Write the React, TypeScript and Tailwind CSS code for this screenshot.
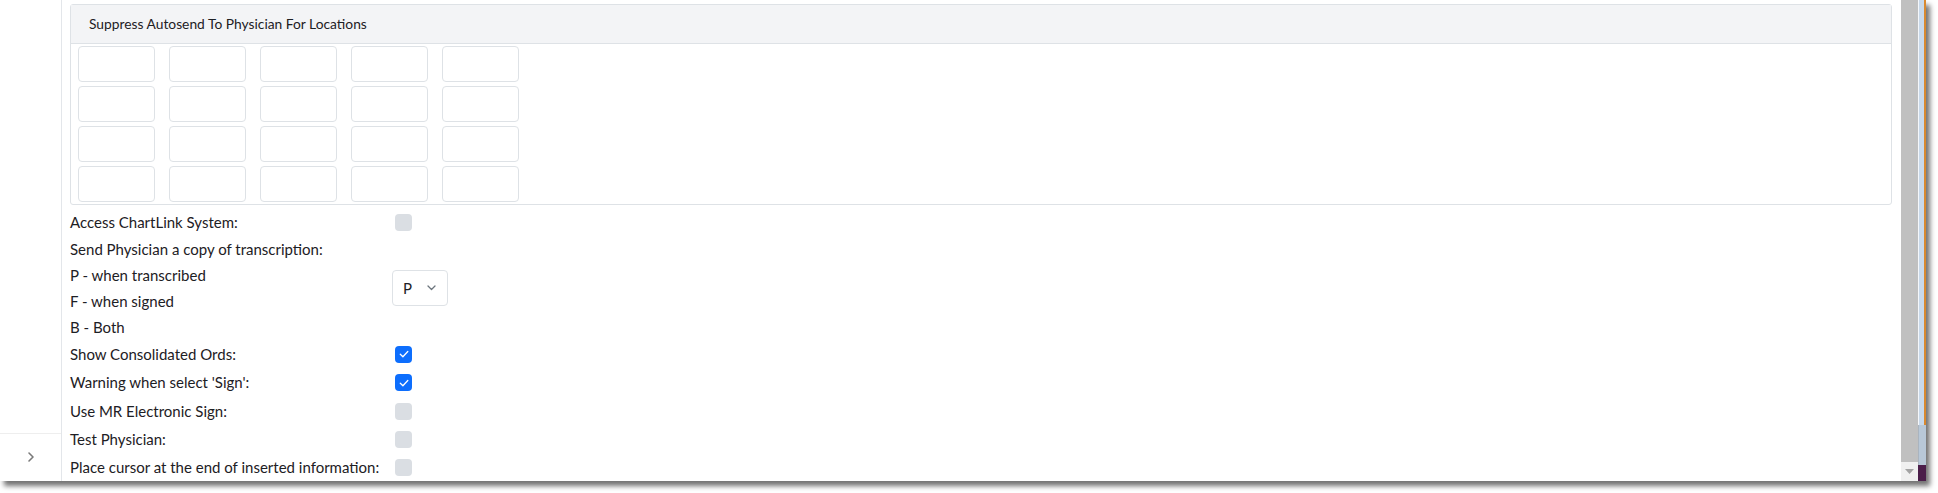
import React from "react";

const font = { fontFamily: "Lato, 'Noto Sans', sans-serif" };

function Checkbox({ checked }: { checked?: boolean }) {
  if (checked) {
    return (
      <div className="ml-[3px] flex h-[17px] w-[17px] items-center justify-center rounded-[4px] bg-[#0d6efd]">
        <svg width="12" height="12" viewBox="0 0 12 12" fill="none">
          <path d="M2.3 6.2 L4.9 8.7 L9.8 3.5" stroke="white" strokeWidth="1.3" strokeLinecap="round" strokeLinejoin="round" />
        </svg>
      </div>
    );
  }
  return <div className="ml-[3px] h-[17px] w-[17px] rounded-[4px] bg-[#dadee3]" />;
}

function CheckRow({ label, checked }: { label: string; checked?: boolean }) {
  return (
    <div className="flex h-[28.3px] items-center">
      <div className="w-[322px] shrink-0">{label}</div>
      <Checkbox checked={checked} />
    </div>
  );
}

export default function App() {
  const rows = [0, 1, 2, 3];
  const cols = [0, 1, 2, 3, 4];
  return (
    <div className="h-[493px] w-[1938px] overflow-hidden bg-white" style={font}>
      <div className="flex h-[481px] w-[1926px] shadow-[4px_5px_5px_rgba(0,0,0,0.55)]">
        {/* sidebar */}
        <div className="flex w-[62px] shrink-0 flex-col border-r border-[#e3e6ea] bg-white">
          <div className="flex-1" />
          <div className="flex h-[48px] items-center justify-center border-t border-[#eeeeee] pb-[2px]">
            <svg width="10" height="12" viewBox="0 0 10 12" fill="none">
              <path d="M3 2 L7 6 L3 10" stroke="#7a7a7a" strokeWidth="1.6" strokeLinecap="round" strokeLinejoin="round" />
            </svg>
          </div>
        </div>

        {/* main */}
        <div className="flex-1 overflow-hidden bg-white pl-[8px] pr-[9px] pt-[4px] text-[15px] text-[#1d2024]">
          <div className="rounded-[3px] border border-[#dee2e6]">
            <div className="flex h-[39px] items-center border-b border-[#dee2e6] bg-[#f3f4f6] pl-[18px] text-[13.8px]">
              Suppress Autosend To Physician For Locations
            </div>
            <div className="grid grid-cols-[repeat(5,77px)] gap-x-[14px] gap-y-[4px] pb-[2px] pl-[7px] pt-[2px]">
              {rows.map((r) =>
                cols.map((c) => (
                  <div key={`${r}-${c}`} className="h-[36px] rounded-[4px] border border-[#dee2e6] bg-white" />
                ))
              )}
            </div>
          </div>

          <div className="pt-[3px]">
            <CheckRow label="Access ChartLink System:" />
            <div className="flex items-center">
              <div className="w-[322px] shrink-0 leading-[26px]">
                <div>Send Physician a copy of transcription:</div>
                <div>P - when transcribed</div>
                <div>F - when signed</div>
                <div>B - Both</div>
              </div>
              <div className="flex h-[36px] w-[56px] items-center justify-between rounded-[4px] border border-[#dee2e6] pl-[10px] pr-[11px]">
                <span>P</span>
                <svg width="9" height="6" viewBox="0 0 9 6" fill="none">
                  <path d="M1 1 L4.5 4.5 L8 1" stroke="#6c757d" strokeWidth="1.3" strokeLinecap="round" strokeLinejoin="round" />
                </svg>
              </div>
            </div>
            <CheckRow label="Show Consolidated Ords:" checked />
            <CheckRow label="Warning when select 'Sign':" checked />
            <CheckRow label="Use MR Electronic Sign:" />
            <CheckRow label="Test Physician:" />
            <CheckRow label="Place cursor at the end of inserted information:" />
          </div>
        </div>

        {/* scrollbar */}
        <div className="flex w-[17px] shrink-0 flex-col bg-[#c0c0c0]">
          <div className="flex-1" />
          <div className="flex h-[19px] items-center justify-center bg-[#f0f0f0]">
            <svg width="9" height="5" viewBox="0 0 9 5">
              <path d="M0 0 L9 0 L4.5 5 Z" fill="#a3a3a3" />
            </svg>
          </div>
        </div>

        {/* window frame strip */}
        <div className="flex w-[8px] shrink-0 flex-col">
          <div className="flex flex-1 border-l border-[#f4f7fb] bg-[#c9d9ea]">
            <div className="flex-1" />
            <div className="w-[2px] bg-[#d9892f]" />
          </div>
          <div className="h-[40px] border-l border-[#aab4bf] bg-[#b8c8d8]" />
          <div className="h-[16px] bg-[#4b1e4a]" />
        </div>
      </div>
    </div>
  );
}
